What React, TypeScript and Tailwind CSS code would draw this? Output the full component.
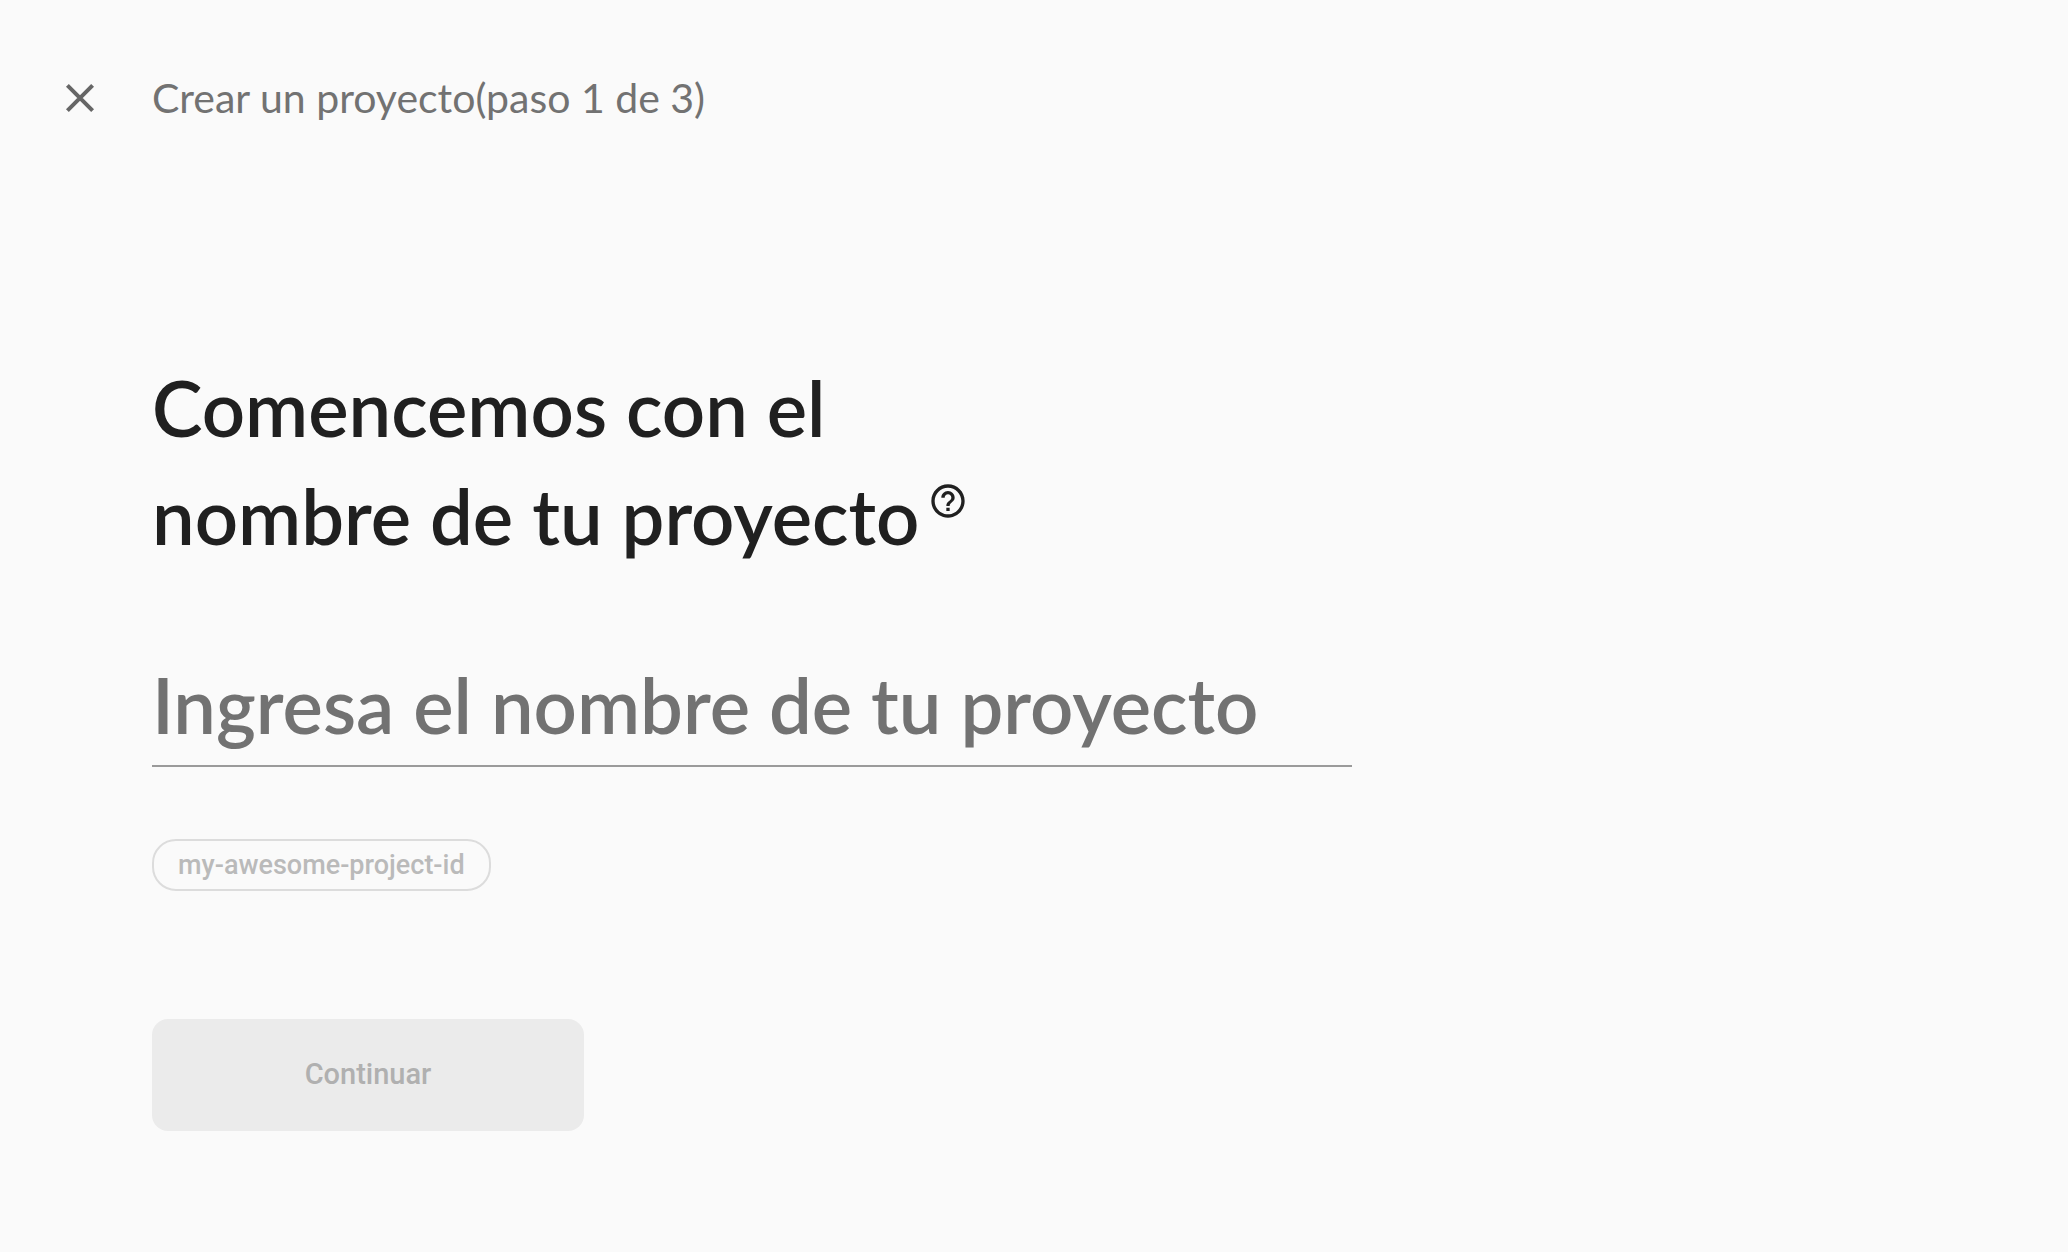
export default function App() {
  return (
    <div className="min-h-screen bg-[#fafafa] pb-16 font-['Lato',sans-serif] text-[#202020]">
      <header className="flex items-center gap-12 px-14 pt-[74px]">
        <button type="button" aria-label="Cerrar" className="flex size-12 shrink-0 items-center justify-center text-[#666666]">
          <svg viewBox="0 0 24 24" className="size-12" fill="none" stroke="currentColor" strokeWidth="2" aria-hidden="true">
            <path d="M5.7 5.7L18.3 18.3M18.3 5.7L5.7 18.3" />
          </svg>
        </button>
        <p className="text-[41px] leading-[46px] text-[#727272]">Crear un proyecto(paso 1 de 3)</p>
      </header>

      <main className="pl-[152px] pr-14 pt-[232px]">
        <form className="flex flex-col items-start" onSubmit={(event) => event.preventDefault()}>
          <h1 className="text-[76px] font-semibold leading-[108px]">
            <label htmlFor="project-name">
              Comencemos con el
              <br />
              nombre de tu proyecto
            </label>
            <button type="button" aria-label="Ayuda" className="ml-2 inline-block size-10 align-[24px]">
              <svg viewBox="0 0 24 24" className="block size-10" fill="currentColor" aria-hidden="true">
                <path d="M11 18h2v-2h-2v2zm1-16C6.480 2 2 6.480 2 12s4.480 10 10 10 10-4.480 10-10S17.520 2 12 2zm0 18c-4.410 0-8-3.590-8-8s3.590-8 8-8 8 3.590 8 8-3.590 8-8 8zm0-14c-2.210 0-4 1.790-4 4h2c0-1.100.9-2 2-2s2 .9 2 2c0 2-3 1.750-3 5h2c0-2.250 3-2.500 3-5 0-2.210-1.790-4-4-4z" />
              </svg>
            </button>
          </h1>

          <input
            id="project-name"
            type="text"
            placeholder="Ingresa el nombre de tu proyecto"
            className="mt-[89px] h-[108px] w-full max-w-[1200px] border-b-2 border-[#9a9a9a] bg-transparent pb-3.5 text-[76px] font-semibold outline-none placeholder:text-[#727272]"
          />

          <button
            type="button"
            disabled
            className="mt-18 flex h-13 items-center rounded-[24px] border-2 border-[#dcdcdc] px-6 font-['Roboto',sans-serif] text-[27px] font-medium text-[#bababa]"
          >
            my-awesome-project-id
          </button>

          <button
            type="submit"
            disabled
            className="mt-32 h-28 w-[432px] max-w-full rounded-2xl bg-[#ebebeb] font-['Roboto',sans-serif] text-[29px] font-medium text-[#b0b0b0]"
          >
            Continuar
          </button>
        </form>
      </main>
    </div>
  );
}
